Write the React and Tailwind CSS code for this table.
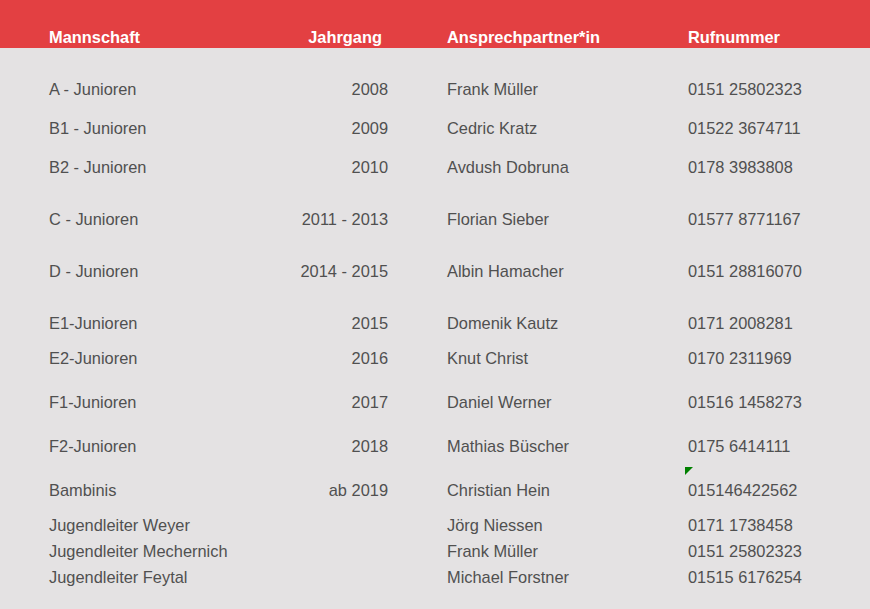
import React from "react";

const rows = [
  { team: "A - Junioren", year: "2008", name: "Frank Müller", phone: "0151 25802323", h: "h-[39px]" },
  { team: "B1 - Junioren", year: "2009", name: "Cedric Kratz", phone: "01522 3674711", h: "h-[39px]" },
  { team: "B2 - Junioren", year: "2010", name: "Avdush Dobruna", phone: "0178 3983808", h: "h-[52px]" },
  { team: "C - Junioren", year: "2011 - 2013", name: "Florian Sieber", phone: "01577 8771167", h: "h-[52px]" },
  { team: "D - Junioren", year: "2014 - 2015", name: "Albin Hamacher", phone: "0151 28816070", h: "h-[52px]" },
  { team: "E1-Junioren", year: "2015", name: "Domenik Kautz", phone: "0171 2008281", h: "h-[35px]" },
  { team: "E2-Junioren", year: "2016", name: "Knut Christ", phone: "0170 2311969", h: "h-[44px]" },
  { team: "F1-Junioren", year: "2017", name: "Daniel Werner", phone: "01516 1458273", h: "h-[44px]" },
  { team: "F2-Junioren", year: "2018", name: "Mathias Büscher", phone: "0175 6414111", h: "h-[44px]" },
  { team: "Bambinis", year: "ab 2019", name: "Christian Hein", phone: "015146422562", h: "h-[35px]", flag: true },
  { team: "Jugendleiter Weyer", year: "", name: "Jörg Niessen", phone: "0171 1738458", h: "h-[26px]" },
  { team: "Jugendleiter Mechernich", year: "", name: "Frank Müller", phone: "0151 25802323", h: "h-[26px]" },
  { team: "Jugendleiter Feytal", year: "", name: "Michael Forstner", phone: "01515 6176254", h: "h-[18px]" },
];

export default function App() {
  return (
    <div className="min-h-screen w-full bg-[#e4e2e3] font-['Liberation_Sans',Arial,sans-serif] text-[16.4px] leading-[18px]">
      {/* header bar */}
      <div className="h-[48px] bg-[#e34042] pt-[28px] pl-[49px] font-bold text-white">
        <div className="flex">
          <div className="w-[219px]">Mannschaft</div>
          <div className="w-[120px] pr-[6px] text-right">Jahrgang</div>
          <div className="w-[241px] ml-[59px]">Ansprechpartner*in</div>
          <div>Rufnummer</div>
        </div>
      </div>

      {/* table body */}
      <div className="pt-[32px] pl-[49px] pb-[20px] text-[#505050]">
        {rows.map((r, i) => (
          <div key={i} className={"flex " + r.h}>
            <div className="w-[219px] whitespace-nowrap">{r.team}</div>
            <div className="w-[120px] text-right whitespace-nowrap">{r.year}</div>
            <div className="w-[241px] ml-[59px] whitespace-nowrap">{r.name}</div>
            <div className="relative whitespace-nowrap">
              {r.flag && (
                <svg
                  className="absolute left-[-3px] top-[-14px]"
                  width="8"
                  height="8"
                  viewBox="0 0 8 8"
                >
                  <polygon points="0,0 8,0 0,8" fill="#008000" />
                </svg>
              )}
              {r.phone}
            </div>
          </div>
        ))}
      </div>
    </div>
  );
}
